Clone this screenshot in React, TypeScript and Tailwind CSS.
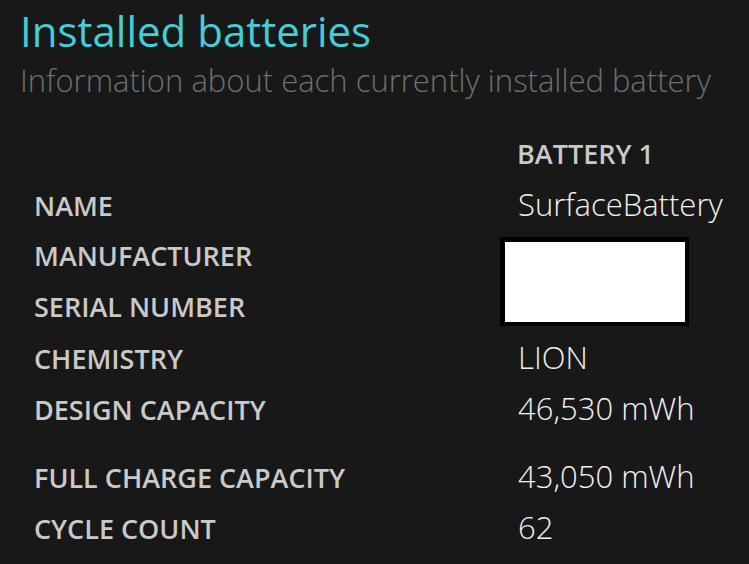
const rows: { label: string; value: string }[] = [
  { label: 'NAME', value: 'SurfaceBattery' },
];

const rowsAfter: { label: string; value: string; gap?: boolean }[] = [
  { label: 'CHEMISTRY', value: 'LION' },
  { label: 'DESIGN CAPACITY', value: '46,530 mWh' },
  { label: 'FULL CHARGE CAPACITY', value: '43,050 mWh', gap: true },
  { label: 'CYCLE COUNT', value: '62' },
];

function Row({ label, value, gap }: { label: string; value: string; gap?: boolean }) {
  return (
    <div className={`flex items-baseline h-[51px] ${gap ? 'mt-[17px]' : ''}`}>
      <div className="w-[466px] shrink-0 text-[27px] leading-[51px] font-semibold text-[#c9c9c9]">
        {label}
      </div>
      <div className="pl-[18px] text-[31px] leading-[51px] font-light text-[#f0f0f0]">{value}</div>
    </div>
  );
}

export default function App() {
  return (
    <div
      className="w-[749px] h-[564px] overflow-hidden bg-[#181818] pl-[20px] pt-[7px]"
      style={{ fontFamily: '"Open Sans", "Noto Sans", sans-serif' }}
    >
      {/* Header */}
      <h1 className="text-[42px] leading-[48px] text-[#42cdd9] font-normal">Installed batteries</h1>
      <p className="mt-[5px] text-[31px] leading-[40px] font-light text-[#6e6e6e]">
        Information about each currently installed battery
      </p>

      {/* Battery table */}
      <div className="mt-[28px] pl-[14px]">
        <div className="flex items-baseline h-[51px]">
          <div className="w-[466px] shrink-0" />
          <div className="pl-[17px] text-[27px] leading-[51px] font-semibold text-[#c9c9c9]">BATTERY 1</div>
        </div>

        {rows.map((r) => (
          <Row key={r.label} {...r} />
        ))}

        <div className="flex items-center">
          <div className="w-[466px] shrink-0 text-[27px] font-semibold text-[#c9c9c9]">
            <div className="leading-[51px]">MANUFACTURER</div>
            <div className="leading-[51px]">SERIAL NUMBER</div>
          </div>
          <div className="w-[189px] h-[89px] bg-black pt-[5px] pl-[5px] pr-[4px] pb-[4px]">
            <div className="w-full h-full bg-white" />
          </div>
        </div>

        {rowsAfter.map((r) => (
          <Row key={r.label} {...r} />
        ))}
      </div>
    </div>
  );
}
